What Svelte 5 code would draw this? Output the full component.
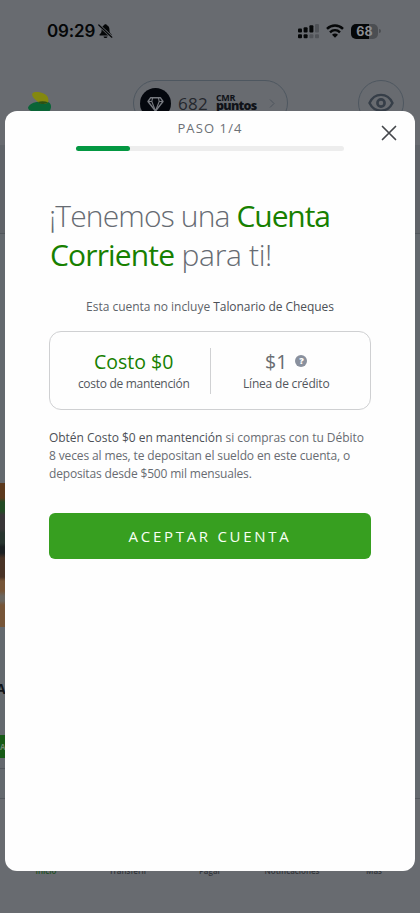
<script>
  let step = 1;
  const tabs = ["Inicio", "Transferir", "Pagar", "Notificaciones", "Más"];

  $: progress = step * 20;
</script>

<div class="screen">
  <div class="status-bar">
    <div class="clock">
      <span class="time">09:29</span>
      <svg width="15" height="16" viewBox="0 0 15 16">
        <path d="M1.600 11.300c1.600-1 2-2.200 2-4.300C3.600 4 4.800 2.600 6.100 2.200c.2-1.300 2.600-1.300 2.800 0C10.400 2.600 11.500 4 11.500 7c0 2.100.4 3.300 2 4.300v1.200H1.600zM5.500 13.400h4c-.4 2.100-3.600 2.100-4 0z" fill="#050708" />
        <path d="M1 2.200l13 12" stroke="#686b70" stroke-width="2.600" />
        <path d="M.8 2l13 12.200" stroke="#050708" stroke-width="1.200" stroke-linecap="round" />
      </svg>
    </div>
    <div class="signals">
      <svg width="22" height="16" viewBox="0 0 22 16">
        <g fill="#050708">
          <rect x="0" y="5.500" width="4" height="4" rx="1" />
          <rect x="5.600" y="4.200" width="4" height="5.300" rx="1" />
          <rect x="11.400" y="2.300" width="4" height="7.200" rx="1" />
          <rect x="0" y="11.200" width="4" height="4" rx="1" />
          <rect x="5.600" y="11.200" width="4" height="4" rx="1" />
        </g>
        <g fill="#505358">
          <rect x="17" y="1" width="4" height="8.500" rx="1" />
          <rect x="11.400" y="11.200" width="4" height="4" rx="1" />
          <rect x="17" y="11.200" width="4" height="4" rx="1" />
        </g>
      </svg>
      <svg class="wifi" width="18" height="14" viewBox="0 0 18 14" fill="none" stroke="#050708" stroke-width="2.400">
        <path d="M1 4.900c4.500-4.500 11.500-4.500 16 0M4 8.300c2.900-2.800 7.100-2.800 10 0" />
        <path d="M6 10.700c1.700-1.600 4.300-1.600 6 0L9 13.700z" fill="#050708" stroke="none" />
      </svg>
      <div class="battery"><span>68</span></div>
      <i class="battery-tip"></i>
    </div>
  </div>

  <header>
    <svg class="logo" width="24" height="24" viewBox="0 0 24 24">
      <path d="M.1 15.200C1.500 11.500 8 9.200 15 9.200c6 0 8.600 2 7.900 6.800-.9 4-4 6-9.500 5.500C7 20.500-.6 19 .1 15.200z" fill="#0a6436" />
      <path d="M4.200 2C4.800-.7 11-.2 15 1.200c4.800 1.800 6.200 5.200 5 9.200-2.600 2.200-8 1.600-10.200-.6C7.600 7.700 3.600 5 4.200 2z" fill="#84880f" />
      <path d="M9.800 9.900c3-.9 7.200-.9 10.200.4-2.200 2.300-7.800 2.100-10.200-.4z" fill="#2c5014" />
    </svg>
    <div class="points">
      <svg width="31" height="31" viewBox="0 0 31 31" fill="none" stroke="#777a80" stroke-width="1.400" stroke-linejoin="round">
        <circle cx="15.500" cy="15.500" r="15.500" fill="#04070d" stroke="none" />
        <path d="M10.500 9.800h10l2.500 3.700-7.500 9.500L8 13.500z" />
        <path d="M12.600 9.800l-.8 3.700 3.700 9.500 3.700-9.500-.8-3.700M8 13.500h3.800M19.200 13.500H23" stroke-width="1.100" />
      </svg>
      <span class="amount">682</span>
      <span class="brand"><small>CMR</small><b>puntos</b></span>
      <svg class="chevron" width="6" height="9" viewBox="0 0 6 9" fill="none" stroke="#4d545d">
        <path d="M1 .5l4 4-4 4" />
      </svg>
    </div>
    <div class="eye">
      <svg width="26" height="20" viewBox="0 0 26 20" fill="none" stroke="#363e48" stroke-width="2.400">
        <path d="M1.500 10C6.500-.8 19.500-.8 24.500 10 19.500 20.300 6.500 20.300 1.500 10z" />
        <circle cx="13" cy="10" r="3.600" stroke-width="2.600" />
      </svg>
    </div>
  </header>

  <main>
    <div class="hero"></div>
    <div class="promo">
      <div class="promo-photo"></div>
      <div class="promo-title">A</div>
      <div class="promo-button">A</div>
      <div class="promo-end"></div>
    </div>
  </main>

  <nav>
    {#each tabs as tab, i}
      <span class:active={i === 0}>{tab}</span>
    {/each}
  </nav>

  <section class="modal">
    <p class="step">PASO {step}/4</p>
    <div class="progress"><i style="width: {progress}%"></i></div>
    <button class="close" aria-label="Cerrar">
      <svg width="16" height="16" viewBox="0 0 16 16" fill="none" stroke="#44474b" stroke-width="1.700" stroke-linecap="round">
        <path d="M1.500 1.500l13 13M14.500 1.500l-13 13" />
      </svg>
    </button>

    <div class="content">
      <h1>
        <span class="title-one">¡Tenemos una <b>Cuenta</b></span>
        <span class="title-two"><b>Corriente</b> para ti!</span>
      </h1>
      <p class="notice">Esta cuenta no incluye <b>Talonario de Cheques</b></p>

      <div class="offer">
        <div class="offer-item">
          <strong>Costo $0</strong>
          <span class="maintenance">costo de mantención</span>
        </div>
        <div class="divider"></div>
        <div class="offer-item credit">
          <div class="credit-value">
            <strong>$1</strong>
            <span class="help">?</span>
          </div>
          <span class="credit-label">Línea de crédito</span>
        </div>
      </div>

      <p class="conditions">
        <span class="line-one"><b>Obtén Costo $0 en mantención</b> si compras con tu Débito</span>
        <span class="line-two">8 veces al mes, te depositan el sueldo en este cuenta, o</span>
        <span class="line-three">depositas desde $500 mil mensuales.</span>
      </p>

      <button class="accept">ACEPTAR CUENTA</button>
    </div>
  </section>
</div>

<style>
  :global(body) {
    background: #686b70;
  }

  * {
    box-sizing: border-box;
  }

  .screen {
    position: relative;
    height: 913px;
    overflow: hidden;
    display: grid;
    grid-template-rows: 62px 83px 653px 115px;
    background: #686b70;
    font-family: "Open Sans", "Noto Sans", sans-serif;
    color: #5f646a;
  }

  .status-bar {
    display: flex;
    justify-content: space-between;
    padding: 23px 39px 0 47px;
    font-family: Inter, sans-serif;
  }

  .clock,
  .signals {
    display: flex;
    align-items: center;
    height: 16px;
  }

  .clock {
    gap: 3px;
  }

  .time {
    font-size: 17px;
    font-weight: 600;
    letter-spacing: -0.15px;
    color: #050708;
  }

  .wifi {
    margin: 0 7px 0 6px;
  }

  .battery {
    width: 27px;
    height: 15px;
    border-radius: 5px;
    background: linear-gradient(90deg, #050708 68%, #4b4e52 68%);
    color: #8b8e93;
    font-size: 12.5px;
    font-weight: 700;
    line-height: 15px;
    text-align: center;
  }

  .battery-tip {
    width: 2px;
    height: 4px;
    margin-left: 1px;
    border-radius: 0 2px 2px 0;
    background: #4b4e52;
  }

  header {
    display: flex;
    align-items: flex-start;
    padding: 18px 16px 0 28px;
  }

  .logo {
    margin-top: 12px;
  }

  .points {
    display: flex;
    align-items: center;
    width: 155px;
    height: 46px;
    margin-left: 81px;
    padding-left: 6px;
    border: 1px solid #4e5760;
    border-radius: 23px;
  }

  .amount {
    width: 31px;
    margin-left: 7px;
    font-size: 17px;
    letter-spacing: 0.3px;
    color: #24272d;
  }

  .brand {
    display: flex;
    flex-direction: column;
    width: 42px;
    margin-left: 7px;
    margin-top: -3px;
    color: #101319;
  }

  .brand small {
    font-size: 9px;
    font-weight: 700;
    line-height: 7px;
    letter-spacing: -0.4px;
  }

  .brand b {
    font-size: 12.5px;
    font-weight: 800;
    line-height: 9px;
    letter-spacing: -0.75px;
  }

  .chevron {
    margin-left: 11px;
  }

  .eye {
    display: grid;
    place-items: center;
    width: 46px;
    height: 46px;
    margin-left: auto;
    border: 1px solid #4e5760;
    border-radius: 50%;
  }

  main {
    background: #64696e;
  }

  .hero {
    height: 89px;
    background: #606469;
    border-bottom: 1px solid #52575c;
  }

  .promo {
    padding-top: 249px;
  }

  .promo-photo {
    width: 12px;
    height: 144px;
    background: linear-gradient(#5c391d 0 15px, #234b24 19px 28px, #393638 32px 46px, #28352f 50px 60px, #1c2022 64px 70px, #493326 75px 94px, #765538 98px 108px, #6b665f 113px 118px, #765538 122px);
  }

  .promo-title {
    height: 108px;
    padding-top: 55px;
    margin-left: -4px;
    font-size: 14px;
    font-weight: 700;
    line-height: 14px;
    color: #111419;
  }

  .promo-button {
    width: 12px;
    height: 23px;
    background: #175b16;
    color: #718570;
    font-size: 8px;
    font-weight: 700;
    line-height: 23px;
  }

  .promo-end {
    height: 11px;
    width: 12px;
    border-bottom: 1px solid #53585d;
  }

  nav {
    display: grid;
    grid-template-columns: repeat(5, 1fr);
    align-items: start;
    padding: 66px 5px 0;
    border-top: 1px solid #53585d;
    font-size: 8px;
    font-weight: 600;
    line-height: 11px;
    text-align: center;
    color: #33363b;
  }

  .active {
    color: #1d4e20;
  }

  .modal {
    position: absolute;
    top: 111px;
    left: 5px;
    width: 410px;
    height: 759.5px;
    border-radius: 12px;
    background: #fefefe;
  }

  p,
  h1 {
    margin: 0;
  }

  .step {
    padding-top: 8px;
    font-size: 13px;
    line-height: 18px;
    letter-spacing: 1.1px;
    text-align: center;
    color: #6c7076;
  }

  .progress {
    width: 268px;
    height: 5px;
    margin: 9px auto 0;
    border-radius: 3px;
    background: #ededed;
  }

  .progress i {
    display: block;
    height: 5px;
    border-radius: 3px;
    background: #049842;
  }

  .close {
    position: absolute;
    top: 14px;
    right: 18px;
    display: flex;
    padding: 0;
    border: 0;
    background: none;
  }

  .content {
    padding: 45px 44px 0;
  }

  h1 {
    font-size: 30px;
    font-weight: 300;
    line-height: 39px;
    color: #666b72;
    white-space: nowrap;
  }

  h1 span,
  .conditions span {
    display: block;
  }

  h1 b {
    font-weight: 400;
    color: #178000;
  }

  .title-one {
    letter-spacing: -0.85px;
  }

  .title-one b {
    letter-spacing: -1.1px;
  }

  .title-two {
    padding-left: 1px;
    letter-spacing: -0.35px;
  }

  .title-two b {
    letter-spacing: -0.85px;
  }

  .notice {
    margin-top: 24px;
    font-size: 12px;
    line-height: 18px;
    letter-spacing: -0.03px;
    text-align: center;
    white-space: nowrap;
  }

  .notice b {
    font-weight: 500;
    letter-spacing: -0.06px;
    color: #4c5056;
  }

  .offer {
    display: flex;
    align-items: center;
    height: 79px;
    margin-top: 15px;
    padding-top: 1px;
    border: 1px solid #cfd0d2;
    border-radius: 12px;
  }

  .offer-item {
    display: flex;
    flex-direction: column;
    align-items: center;
    width: 160px;
    padding-left: 8px;
    font-size: 12px;
    white-space: nowrap;
    color: #53575d;
  }

  .offer-item.credit {
    padding: 0 8px 0 0;
  }

  .offer-item strong {
    font-size: 19.5px;
    font-weight: 400;
    line-height: 25px;
    color: #178000;
  }

  .offer-item.credit strong {
    color: #686c71;
  }

  .offer-item span {
    line-height: 20px;
  }

  .maintenance {
    letter-spacing: -0.3px;
  }

  .credit-label {
    letter-spacing: -0.2px;
  }

  .credit-value {
    display: flex;
    align-items: center;
    gap: 8px;
  }

  .offer-item .help {
    width: 12px;
    height: 12px;
    border-radius: 50%;
    background: #89909d;
    color: #fff;
    font-size: 9px;
    font-weight: 800;
    line-height: 12px;
    text-align: center;
  }

  .divider {
    width: 1px;
    height: 46px;
    background: #d0d1d3;
  }

  .conditions {
    margin-top: 19px;
    font-size: 12px;
    line-height: 18px;
    white-space: nowrap;
    color: #686c72;
  }

  .conditions b {
    font-weight: 500;
    color: #4c5056;
  }

  .line-one {
    letter-spacing: -0.03px;
  }

  .line-two {
    letter-spacing: -0.13px;
  }

  .line-three {
    letter-spacing: -0.17px;
  }

  .accept {
    display: block;
    width: 322px;
    height: 46px;
    margin-top: 30px;
    padding: 0;
    border: 0;
    border-radius: 6px;
    background: #379f20;
    color: #f8fff5;
    font-family: inherit;
    font-size: 15px;
    letter-spacing: 2.7px;
  }
</style>
